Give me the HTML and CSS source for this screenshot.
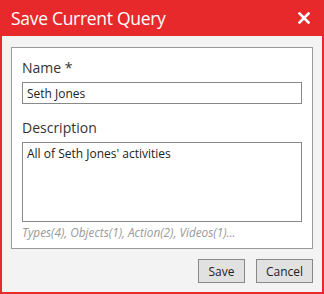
FILE: index.html
```html
<!DOCTYPE html>
<html lang="en">
<head>
    <meta charset="UTF-8">
    <title>Save Current Query</title>
    <link rel="stylesheet" href="styles.css">
</head>
<body>
    <div class="dialog">
        <div class="dialog-header">
            <h1>Save Current Query</h1>
            <svg class="close" width="12" height="12" viewBox="0 0 12 12">
                <path d="M1.5 1.5 L10.5 10.5 M10.5 1.5 L1.5 10.5" stroke="#fff" stroke-width="2.6" stroke-linecap="square"/>
            </svg>
        </div>

        <div class="dialog-body">
            <div class="panel">
                <div class="form-group">
                    <label for="name">Name *</label>
                    <input type="text" id="name" value="Seth Jones">
                </div>

                <div class="form-group">
                    <label for="description">Description</label>
                    <textarea id="description">All of Seth Jones' activities</textarea>
                    <div class="hint">Types(4), Objects(1), Action(2), Videos(1)...</div>
                </div>
            </div>

            <div class="dialog-footer">
                <button class="btn btn-save">Save</button>
                <button class="btn btn-cancel">Cancel</button>
            </div>
        </div>
    </div>
</body>
</html>
```

FILE: styles.css
```css
* {
    margin: 0;
    padding: 0;
    box-sizing: border-box;
}

body {
    font-family: 'Open Sans', 'Noto Sans', sans-serif;
    color: #222;
    background: #fff;
}

.dialog {
    width: 324px;
    height: 294px;
    border: 2px solid #e8292c;
    border-top: none;
    display: flex;
    flex-direction: column;
    background: #f3f3f3;
}

.dialog-header {
    height: 36px;
    margin: 0 -2px;
    padding: 0 14px 0 11px;
    background: #e8292c;
    color: #fff;
    display: flex;
    align-items: center;
    justify-content: space-between;
}

.dialog-header h1 {
    font-size: 17.5px;
    font-weight: normal;
    letter-spacing: -0.3px;
}

.close {
    display: block;
}

.dialog-body {
    flex: 1;
    padding: 11px 9px 0 9px;
}

.panel {
    height: 202px;
    background: #fff;
    border: 1px solid #999;
    padding: 10px 10px 0 10px;
}

.form-group {
    margin-bottom: 14px;
}

.form-group label {
    display: block;
    font-size: 14px;
    line-height: 19px;
    color: #333;
    margin-bottom: 5px;
}

.form-group input,
.form-group textarea {
    display: block;
    width: 100%;
    border: 1px solid #888;
    font-family: inherit;
    font-size: 12px;
    color: #222;
    padding: 0 4px;
    outline: none;
}

.form-group input {
    height: 22px;
}

.form-group textarea {
    height: 80px;
    resize: none;
    padding-top: 2px;
}

.hint {
    font-size: 11.8px;
    font-style: italic;
    color: #999;
    margin-top: 2px;
}

.dialog-footer {
    display: flex;
    justify-content: flex-end;
    gap: 11px;
    padding-top: 10px;
}

.btn {
    height: 24px;
    border: 1px solid #888;
    background: #e1e1e1;
    font-family: inherit;
    font-size: 12px;
    color: #222;
}

.btn-save {
    width: 47px;
}

.btn-cancel {
    width: 57px;
}
```
